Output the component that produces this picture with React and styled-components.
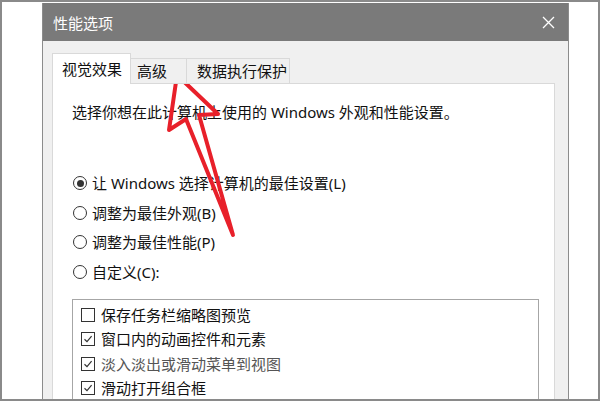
import styled, { createGlobalStyle } from "styled-components";

const GlobalStyle = createGlobalStyle`
  html, body {
    margin: 0;
    padding: 0;
    background: #ffffff;
  }
  body {
    font-family: "Noto Sans", "Noto Sans CJK SC", sans-serif;
    color: #111111;
  }
`;

const Frame = styled.div`
  position: relative;
  box-sizing: border-box;
  width: 600px;
  height: 401px;
  border: 2px solid #8a8a8a;
  padding: 1px 0 0 40px;
  overflow: hidden;
  background: #ffffff;
`;

const Dialog = styled.div`
  width: 525px;
  height: 420px;
  border: 1px solid #8c8c8c;
  border-top: none;
  display: flex;
  flex-direction: column;
  background: #f0f0f0;
`;

const TitleBar = styled.div`
  height: 38px;
  background: #7a7a7a;
  color: #ffffff;
  display: flex;
  align-items: center;
  justify-content: space-between;
  padding: 0 13px 0 10px;
  font-size: 15px;
  font-family: "Noto Sans CJK SC", sans-serif;
`;

const Close = styled.svg`
  width: 13px;
  height: 13px;
`;

const Body = styled.div`
  flex: 1;
  padding: 12px 13px 0 9px;
  display: flex;
  flex-direction: column;
`;

const TabRow = styled.div`
  display: flex;
  align-items: flex-end;
  margin-bottom: -1px;
  position: relative;
  z-index: 1;
`;

const Tab = styled.div`
  box-sizing: border-box;
  height: ${(p) => (p.$active ? "31px" : "26px")};
  width: ${(p) => p.$w}px;
  padding-left: ${(p) => p.$pl}px;
  display: flex;
  align-items: center;
  background: ${(p) => (p.$active ? "#ffffff" : "#f0f0f0")};
  border: 1px solid #d9d9d9;
  border-bottom: ${(p) => (p.$active ? "none" : "1px solid #d9d9d9")};
  border-left: ${(p) => (p.$first ? "1px solid #d9d9d9" : "none")};
  font-size: 15px;
  font-family: "Noto Sans CJK SC", sans-serif;
  line-height: 20px;
  color: #111111;
`;

const Panel = styled.div`
  flex: 1;
  background: #ffffff;
  border: 1px solid #d9d9d9;
  padding: 18px 15px 0 19px;
  display: flex;
  flex-direction: column;
`;

const Intro = styled.div`
  font-size: 15px;
  line-height: 20px;
  margin-bottom: 51px;
`;

const Options = styled.div`
  display: flex;
  flex-direction: column;
  gap: 9.5px;
  padding-left: 1px;
  margin-bottom: 17px;
`;

const OptionRow = styled.div`
  display: flex;
  align-items: center;
  gap: 5px;
  height: 20px;
  font-size: 15px;
  line-height: 20px;
`;

const Radio = styled.span`
  box-sizing: border-box;
  width: 14px;
  height: 14px;
  border-radius: 50%;
  border: 1px solid #333333;
  display: flex;
  align-items: center;
  justify-content: center;

  &::after {
    content: "";
    width: 7px;
    height: 7px;
    border-radius: 50%;
    background: ${(p) => (p.$on ? "#333333" : "transparent")};
  }
`;

const ListBox = styled.div`
  flex: 1;
  border: 1px solid #a6a6a6;
  padding: 5px 0 0 8px;
  display: flex;
  flex-direction: column;
  gap: 4.5px;
`;

const CheckRow = styled.div`
  display: flex;
  align-items: center;
  gap: 6px;
  height: 20px;
  font-size: 15px;
  line-height: 20px;
  color: ${(p) => (p.$dim ? "#555555" : "#111111")};
`;

const Box = styled.span`
  box-sizing: border-box;
  width: 14px;
  height: 14px;
  border: 1px solid #333333;
  display: flex;
  align-items: center;
  justify-content: center;
  background: #ffffff;
`;

const Arrow = styled.svg`
  position: absolute;
  left: 0;
  top: 0;
  width: 600px;
  height: 401px;
  pointer-events: none;
`;

const tabs = [
  { label: "视觉效果", w: 79, pl: 9, active: true },
  { label: "高级", w: 56, pl: 6 },
  { label: "数据执行保护", w: 103, pl: 10 },
];

const radios = [
  { label: "让 Windows 选择计算机的最佳设置(L)", on: true },
  { label: "调整为最佳外观(B)" },
  { label: "调整为最佳性能(P)" },
  { label: "自定义(C):" },
];

const checks = [
  { label: "保存任务栏缩略图预览", on: false },
  { label: "窗口内的动画控件和元素", on: true },
  { label: "淡入淡出或滑动菜单到视图", on: true, dim: true },
  { label: "滑动打开组合框", on: true },
];

function Check({ on }) {
  return (
    <Box>
      {on && (
        <svg width="10" height="10" viewBox="0 0 10 10">
          <path d="M1.5 5.2 L4 7.6 L8.6 2.2" fill="none" stroke="#333" strokeWidth="1.2" />
        </svg>
      )}
    </Box>
  );
}

export default function App() {
  return (
    <>
      <GlobalStyle />
      <Frame>
        <Dialog>
          <TitleBar>
            <span>性能选项</span>
            <Close viewBox="0 0 13 13">
              <path d="M1 1 L12 12 M12 1 L1 12" stroke="#ffffff" strokeWidth="1.3" />
            </Close>
          </TitleBar>
          <Body>
            <TabRow>
              {tabs.map((t, i) => (
                <Tab key={t.label} $active={t.active} $first={i === 0} $w={t.w} $pl={t.pl}>
                  {t.label}
                </Tab>
              ))}
            </TabRow>
            <Panel>
              <Intro>选择你想在此计算机上使用的 Windows 外观和性能设置。</Intro>
              <Options>
                {radios.map((r) => (
                  <OptionRow key={r.label}>
                    <Radio $on={r.on} />
                    {r.label}
                  </OptionRow>
                ))}
              </Options>
              <ListBox>
                {checks.map((c) => (
                  <CheckRow key={c.label} $dim={c.dim}>
                    <Check on={c.on} />
                    {c.label}
                  </CheckRow>
                ))}
              </ListBox>
            </Panel>
          </Body>
        </Dialog>
        <Arrow viewBox="0 0 600 401">
          <polygon
            points="175,73 167,128 184,117 231,233 197,113 216,112"
            fill="none"
            stroke="#e8202a"
            strokeWidth="4"
            strokeLinejoin="round"
          />
        </Arrow>
      </Frame>
    </>
  );
}
